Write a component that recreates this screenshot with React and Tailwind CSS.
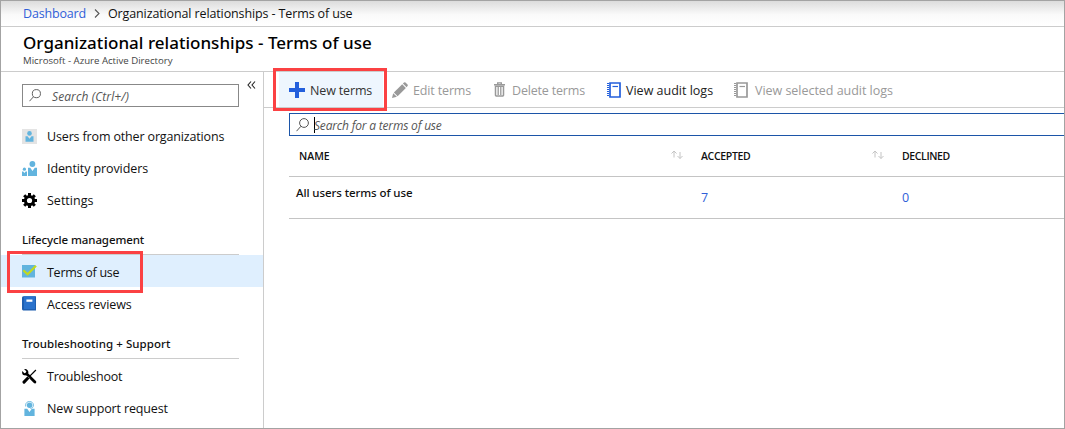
import React from "react";

function Magnifier({ className }) {
  return (
    <svg className={className} viewBox="0 0 13 14" fill="none" stroke="#555" strokeWidth="1">
      <circle cx="8" cy="5" r="4.4" />
      <path d="M4.9 8.3 0.5 13.2" />
    </svg>
  );
}

function GuestIcon() {
  return (
    <svg className="size-[15px]" viewBox="0 0 15 15">
      <path fill="#e4e4e4" d="M0 0h15v15H0z" />
      <circle cx="7.5" cy="4.4" r="2.3" fill="#62b4de" />
      <path fill="#62b4de" d="M3.5 7.2h2L7.5 9.8l2-2.6h2v5.5h-8z" />
    </svg>
  );
}

function IdentityIcon() {
  return (
    <svg className="size-[15px]" viewBox="0 0 15 15" fill="#62b4de">
      <circle cx="10.4" cy="3" r="2.9" />
      <path d="M6 6.8h2.2l2.3 3.2 2.3-3.2H15V15H6z" />
      <circle cx="2.4" cy="8.2" r="1.6" />
      <path d="M0 10.6h1.2l1.2 1.5 1.2-1.5H5V15H0z" />
    </svg>
  );
}

function GearIcon() {
  return (
    <svg className="size-[15px]" viewBox="0 0 15 15">
      <g fill="#000">
        <path d="M6 0h3v15H6z" />
        <path d="M6 0h3v15H6z" transform="rotate(45 7.5 7.5)" />
        <path d="M6 0h3v15H6z" transform="rotate(90 7.5 7.5)" />
        <path d="M6 0h3v15H6z" transform="rotate(135 7.5 7.5)" />
        <circle cx="7.5" cy="7.5" r="5.6" />
      </g>
      <circle cx="7.5" cy="7.5" r="2.6" fill="#fff" />
    </svg>
  );
}

function TermsIcon() {
  return (
    <svg className="size-[15px]" viewBox="0 0 15 15">
      <path fill="#62b4de" d="M0 1h13v12.5H0z" />
      <path d="M1.3 6.2 5.6 10.2 14 1.8" fill="none" stroke="#c3da1e" strokeWidth="2.2" />
    </svg>
  );
}

function BookIcon() {
  return (
    <svg className="size-[15px]" viewBox="0 0 15 15">
      <path fill="#1f5fb0" d="M1.2.3H14V14.5H1.2Q0 14.3 0 13V1.6Q0 .4 1.2.3z" />
      <path fill="#2a72cc" d="M2 .3h11v12.7H2z" />
      <path fill="#fff" d="M4.4 3.5h6v2.3h-6z" />
    </svg>
  );
}

function ToolsIcon() {
  return (
    <svg className="size-[15px]" viewBox="0 0 15 15">
      <path d="M4.6 4.8 12.9 13" stroke="#000" strokeWidth="2.8" strokeLinecap="round" />
      <path
        fill="#000"
        d="M2.2.2 4.3 2.3 3.9 3.8 2.4 4.2.3 2.1C-.3 4.3.6 5.9 2.2 6.3c1 .3 1.8 0 2.3-.3L6 4.6C6.6 3.5 6.5 2.2 5.6 1.2 4.7.2 3.3-.1 2.2.2z"
      />
      <path d="M13.9 1 6.8 8.2" stroke="#000" strokeWidth="1.2" />
      <path d="M5.9 9 2 13.1" stroke="#000" strokeWidth="3" strokeLinecap="round" />
      <path d="M5.6 7.4 7.6 9.4" stroke="#fff" strokeWidth=".5" />
    </svg>
  );
}

function SupportIcon() {
  return (
    <svg className="size-[15px]" viewBox="0 0 15 15">
      <circle cx="7.6" cy="4.3" r="2.7" fill="#62b4de" />
      <path d="M3.7 5.5V4C3.7 1.8 5.4.5 7.5.5s3.9 1.3 3.9 3.5c0 2.2-1 3.2-3 3.5" fill="none" stroke="#62b4de" strokeWidth=".9" />
      <path fill="#62b4de" d="M2.4 7.8h2.8L7.5 11l2.3-3.2h2.8V15H2.4z" />
    </svg>
  );
}

function PlusIcon() {
  return (
    <svg className="size-4" viewBox="0 0 16 16" fill="#235fdc">
      <path d="M6 0h4v6h6v4h-6v6H6v-6H0V6h6z" />
    </svg>
  );
}

function PencilIcon() {
  return (
    <svg className="size-4" viewBox="0 0 16 16" fill="#999">
      <path d="M0 16 1.2 11.2 4.9 14.8z" />
      <path d="M1.9 10.5 10.2 2.2 13.9 5.9 5.6 14.2z" />
      <path d="M10.9 1.5 12 .5Q12.7-.1 13.5.6L15.5 2.6Q16.1 3.3 15.5 4.1L14.6 5.2z" />
    </svg>
  );
}

function TrashIcon() {
  return (
    <svg className="-mt-px h-[15px] w-[11px]" viewBox="0 0 11 15" fill="none" stroke="#999">
      <path d="M0 2.7h11M3.7 2.5V.9h3.6v1.6" strokeWidth="1.4" />
      <path d="M1.5 4.2v9q0 .7.7.7h6.6q.7 0 .7-.7v-9z" strokeWidth="1.5" />
      <path d="M4.2 5v8M6.8 5v8" strokeWidth="1.3" />
    </svg>
  );
}

function NotebookIcon({ className }) {
  return (
    <svg className={className} viewBox="0 0 14 16" fill="none" stroke="currentColor">
      <path d="M3 1h10v14H3z" strokeWidth="1.7" />
      <path d="M5.5 4.5h5.5" strokeWidth="1.2" />
      <path d="M0 1.5h2M0 3.5h2M0 5.5h2M0 7.5h2M0 9.5h2M0 11.5h2M0 13.5h2" strokeWidth="1" />
    </svg>
  );
}

function SortIcon() {
  return (
    <svg className="mb-[3px] h-[10px] w-3" viewBox="0 0 12 10" fill="none" stroke="#c4c4c4" strokeWidth="1">
      <path d="M3 7.5V1M.5 3.5 3 1l2.5 2.5" />
      <path d="M9 2v6.5M6.5 6 9 8.5 11.5 6" />
    </svg>
  );
}

function NavItem({ icon, label, className, active }) {
  return (
    <div className={active ? "flex h-8 items-center bg-[#dfeffe] pl-[21px]" : "flex h-8 items-center pl-[21px]"}>
      {icon}
      <span className={`ml-[10px] text-[12.5px] ${className}`}>{label}</span>
    </div>
  );
}

function NavHeading({ label, track }) {
  return (
    <div className="mr-6 ml-[21px] flex h-[31px] items-center border-b border-[#ccc] pt-[2px] font-['Noto_Sans',sans-serif] text-[11.5px] font-medium">
      <span className={track}>{label}</span>
    </div>
  );
}

const columns = "grid grid-cols-[412px_201px_1fr]";

export default function App() {
  return (
    <div className="relative flex h-[429px] w-[1065px] flex-col overflow-hidden border border-[#a3a3a3] bg-white font-['Open_Sans',sans-serif] leading-none whitespace-nowrap text-[#111]">
      <nav className="flex h-[26px] shrink-0 items-center border-b border-[#ccc] bg-linear-to-b from-[#dcdcdc] via-[#fafafa] via-55% to-white pl-[22px] text-[12.5px]">
        <span className="pt-[2px] tracking-[-0.17px] text-[#3060d8]">Dashboard</span>
        <svg className="ml-2 h-[9px] w-[6px]" viewBox="0 0 6 9" fill="none" stroke="#555" strokeWidth="1.1">
          <path d="M1 .5 5 4.5 1 8.5" />
        </svg>
        <span className="ml-2 pt-[2px] tracking-[-0.12px]">Organizational relationships - Terms of use</span>
      </nav>

      <header className="flex h-[45px] shrink-0 flex-col border-b border-[#ccc] pt-[6px] pl-[22px]">
        <h1 className="font-['Noto_Sans',sans-serif] text-[17px] leading-[20px] font-medium tracking-[0.02px] text-black">
          Organizational relationships - Terms of use
        </h1>
        <p className="mt-px text-[9.65px] leading-[13px] text-[#444]">Microsoft - Azure Active Directory</p>
      </header>

      <div className="flex min-h-0 flex-1">
        <aside className="w-[263px] shrink-0 border-r border-[#ccc]">
          <div className="flex h-12 items-start pt-3 pl-[21px]">
            <div className="flex h-[23px] w-[217px] items-center border border-[#888] pl-[6px]">
              <Magnifier className="h-[13px] w-3" />
              <span className="ml-[11px] pt-[2px] text-[12px] tracking-[0.09px] text-[#555] italic">Search (Ctrl+/)</span>
            </div>
            <svg className="-mt-[3px] ml-2 h-2 w-[9px]" viewBox="0 0 9 8" fill="none" stroke="#222" strokeWidth="1.1">
              <path d="M4 .5 1 4l3 3.5M8 .5 5 4l3 3.5" />
            </svg>
          </div>
          <NavItem icon={<GuestIcon />} label="Users from other organizations" className="pt-[2px] tracking-[-0.15px]" />
          <NavItem icon={<IdentityIcon />} label="Identity providers" className="pt-[2px] tracking-[-0.1px]" />
          <NavItem icon={<GearIcon />} label="Settings" className="pt-[2px] tracking-[0.01px]" />
          <div className="h-2" />
          <NavHeading label="Lifecycle management" track="tracking-[-0.1px]" />
          <NavItem icon={<TermsIcon />} label="Terms of use" className="pt-[5px] tracking-[-0.26px]" active />
          <NavItem icon={<BookIcon />} label="Access reviews" className="pt-[5px] tracking-[-0.12px]" />
          <div className="h-[9px]" />
          <NavHeading label="Troubleshooting + Support" track="tracking-[0.06px]" />
          <div className="h-px" />
          <NavItem icon={<ToolsIcon />} label="Troubleshoot" className="pt-[2px] tracking-[-0.24px]" />
          <NavItem icon={<SupportIcon />} label="New support request" className="pt-[2px] tracking-[-0.14px]" />
        </aside>

        <main className="min-w-0 flex-1">
          <div className="flex h-9 items-center border-b border-[#ccc] pl-[15px] text-[12.5px] text-[#999]">
            <div className="flex h-full w-[104px] items-center bg-[#eef6fe] pl-[10px] text-[#333]">
              <PlusIcon />
              <span className="ml-[5px] pt-[3px] tracking-[-0.15px]">New terms</span>
            </div>
            <div className="ml-[9px] flex w-[102px] items-center">
              <PencilIcon />
              <span className="ml-[5px] pt-[3px] tracking-[-0.15px]">Edit terms</span>
            </div>
            <div className="flex w-[113px] items-center">
              <TrashIcon />
              <span className="ml-[7px] pt-[3px] tracking-[-0.18px]">Delete terms</span>
            </div>
            <div className="flex w-[127px] items-center text-[#222]">
              <NotebookIcon className="h-4 w-[14px] text-[#235fdc]" />
              <span className="ml-[5px] pt-[3px]">View audit logs</span>
            </div>
            <div className="flex items-center">
              <NotebookIcon className="h-4 w-[14px]" />
              <span className="ml-[7px] pt-[3px] tracking-[-0.03px]">View selected audit logs</span>
            </div>
          </div>

          <div className="mt-[5px] ml-[25px] flex h-[23px] items-center border border-r-0 border-[#1c55a8] pl-[6px]">
            <Magnifier className="h-[14px] w-[13px]" />
            <span className="ml-[5px] h-4 w-px bg-black" />
            <span className="-ml-px pt-[2px] text-[12px] tracking-[-0.19px] text-[#555] italic">Search for a terms of use</span>
          </div>

          <div className="ml-[25px]">
            <div className={`${columns} h-[41px] items-center border-b border-[#c4c4c4] text-[10.5px] font-semibold`}>
              <div className="flex items-center justify-between pr-[18px] pl-[10px]">
                <span>NAME</span>
                <SortIcon />
              </div>
              <div className="flex items-center justify-between pr-[18px]">
                <span className="tracking-[-0.32px]">ACCEPTED</span>
                <SortIcon />
              </div>
              <span className="tracking-[-0.37px]">DECLINED</span>
            </div>
            <div className={`${columns} h-[42px] border-b border-[#c4c4c4] text-[12.5px] leading-[42px] text-[#3060d8]`}>
              <span className="pl-[7px] font-['Noto_Sans',sans-serif] text-[11.5px] leading-[32px] font-medium tracking-[-0.09px] text-[#111]">
                All users terms of use
              </span>
              <span>7</span>
              <span>0</span>
            </div>
          </div>
        </main>
      </div>

      <div className="absolute top-[67px] left-[272px] h-[43px] w-[114px] border-3 border-[#fb4143]" />
      <div className="absolute top-[250px] left-[6px] h-[42px] w-[136px] border-3 border-[#fb4143]" />
    </div>
  );
}
